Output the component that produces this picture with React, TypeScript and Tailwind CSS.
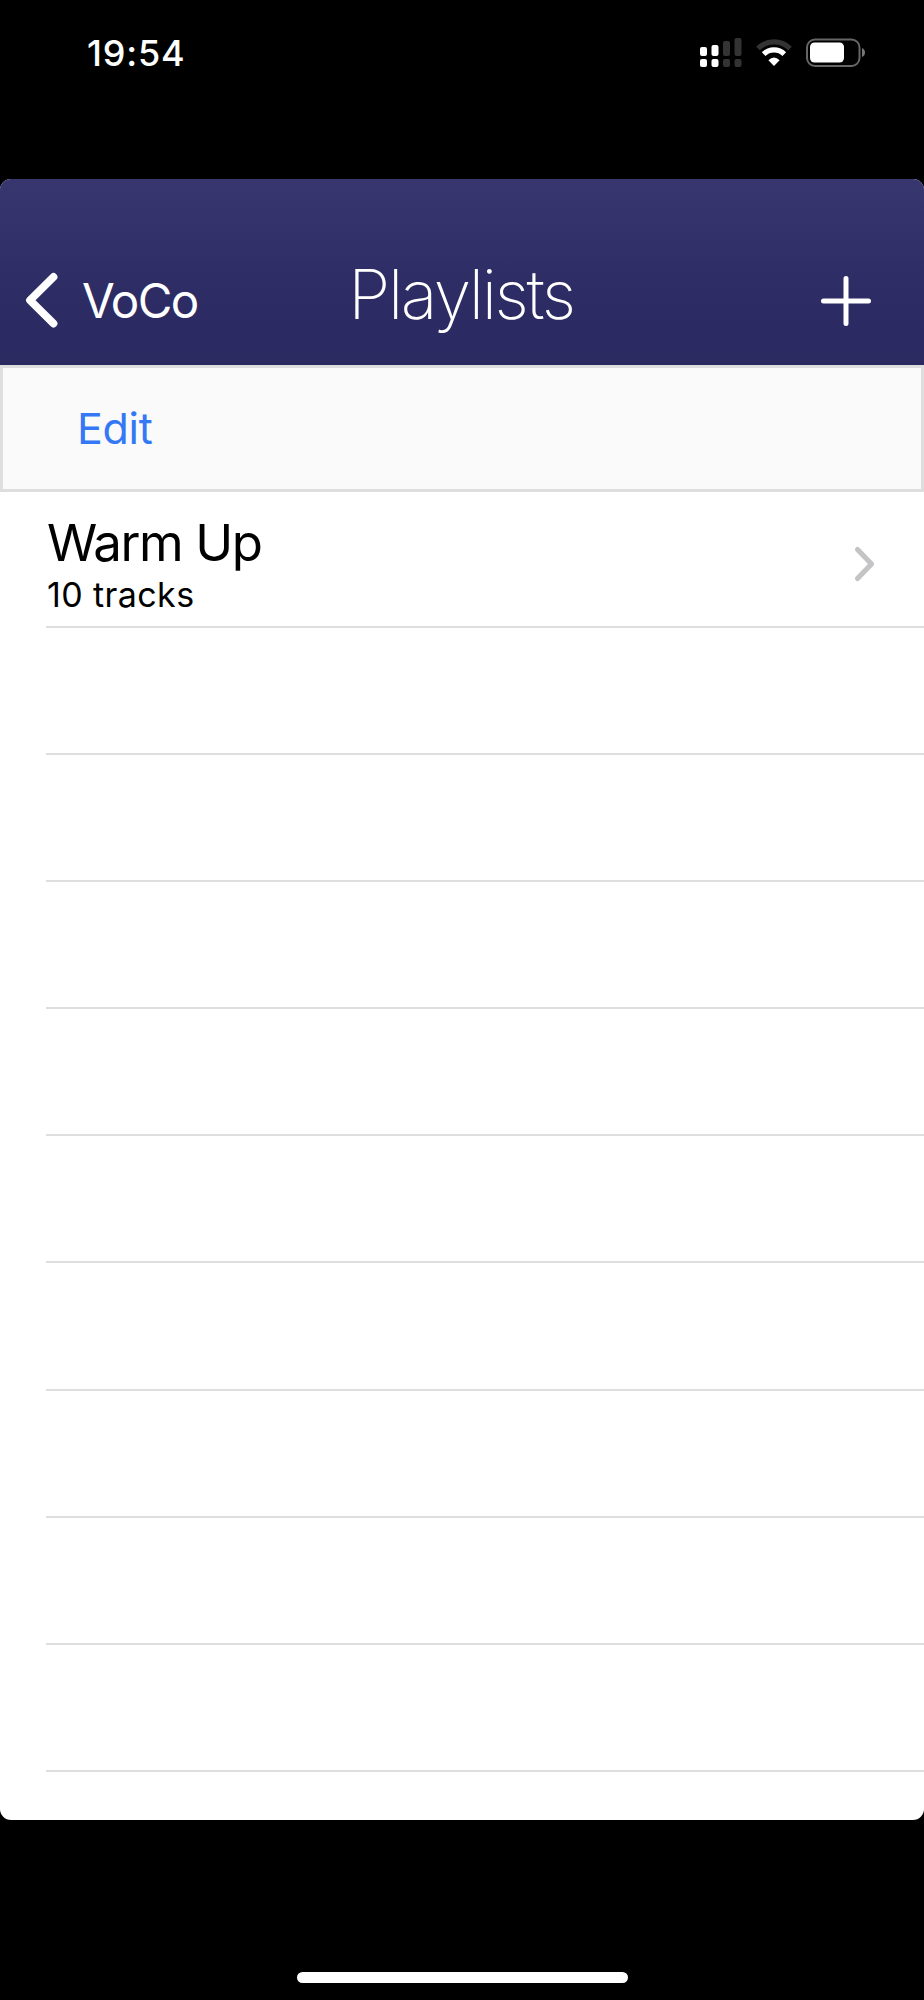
const emptyRows = ["r1", "r2", "r3", "r4", "r5", "r6", "r7", "r8", "r9"];

function StatusBar() {
  return (
    <div className="flex h-[179px] shrink-0 items-start justify-between pl-[87px] pr-[58px] pt-[33px] text-white">
      <div className="text-[36px] font-medium leading-[40px] tracking-[0.8px]">19:54</div>
      <div className="flex gap-[14px] pt-[4px]">
        <svg width="43" height="32" viewBox="0 0 43 32">
          <g fill="#fff">
            <rect x="0" y="10" width="7" height="9" rx="2" />
            <rect x="11.5" y="8" width="7" height="11" rx="2" />
            <rect x="0" y="22" width="7" height="8" rx="2" />
            <rect x="11.5" y="22" width="7" height="8" rx="2" />
          </g>
          <g fill="#333">
            <rect x="23" y="4" width="7" height="15" rx="2" />
            <rect x="34.5" y="1" width="7" height="18" rx="2" />
            <rect x="23" y="22" width="7" height="8" rx="2" />
            <rect x="34.5" y="22" width="7" height="8" rx="2" />
          </g>
        </svg>
        <svg width="36" height="32" viewBox="0 0 36 32" fill="none" className="-ml-[1px]">
          <path d="M2 11.5A22.5 22.5 0 0 1 34 11.5" stroke="#333" strokeWidth="5.2" />
          <path d="M7.7 17.1A14.6 14.6 0 0 1 28.3 17.1" stroke="#fff" strokeWidth="5.2" />
          <path d="M18 29L12.4 23.2Q18 18 23.6 23.2Z" fill="#fff" />
        </svg>
        <svg width="60" height="32" viewBox="0 0 60 32" fill="none">
          <rect x="1" y="2.5" width="52.5" height="26.5" rx="8" stroke="#666" strokeWidth="2" />
          <rect x="4" y="5.5" width="34" height="20" rx="4.5" fill="#fff" />
          <path d="M56 11Q59 12.5 59 15.5T56 20Z" fill="#777" />
        </svg>
      </div>
    </div>
  );
}

function NavigationBar() {
  return (
    <header className="grid h-[185.5px] shrink-0 grid-cols-[1fr_auto_1fr] items-start bg-linear-to-b from-[#37366f] via-[#2d2c65] via-60% to-[#2a2960] pt-[80px] text-white">
      <button className="flex items-center pl-[24px]">
        <svg width="34" height="84" viewBox="0 0 34 84" fill="none">
          <path d="M29.5 18L6 41.2L29.5 64.5" stroke="#fff" strokeWidth="7.8" strokeLinecap="round" strokeLinejoin="round" />
        </svg>
        <span className="pl-[24px] text-[47.5px] font-normal leading-[84px] tracking-[-1.6px]">VoCo</span>
      </button>
      <h1 className="-ml-[2px] text-[68px] font-extralight leading-[70px] tracking-[-2.4px]">Playlists</h1>
      <button className="flex justify-end pr-[52px]" aria-label="Add">
        <svg width="52" height="84" viewBox="0 0 52 84" fill="none">
          <path d="M26 19.5V64.5M3.5 42H48.5" stroke="#fff" strokeWidth="5" strokeLinecap="round" />
        </svg>
      </button>
    </header>
  );
}

export default function App() {
  return (
    <div className="flex h-[2000px] w-[924px] flex-col overflow-hidden bg-black font-['Inter',sans-serif]">
      <StatusBar />
      <main className="flex h-[1641px] shrink-0 flex-col overflow-hidden rounded-[11px] bg-white">
        <NavigationBar />
        <div className="flex h-[127.5px] shrink-0 items-center border-[3px] border-[#dedede] bg-[#fafafa] pl-[74px]">
          <button className="text-[43px] leading-[52px] tracking-[-0.3px] text-[#3478f6]">Edit</button>
        </div>
        <ul className="flex flex-col pl-[46px]">
          <li className="flex h-[136px] shrink-0 items-start justify-between border-b-2 border-[#dedede] pr-[47px]">
            <div className="flex flex-col pl-[1px] pt-[21px]">
              <span className="text-[51px] leading-[60px] tracking-[-1.4px]">Warm Up</span>
              <span className="text-[34px] leading-[44px] tracking-[0.4px]">10 tracks</span>
            </div>
            <svg width="24" height="38" viewBox="0 0 24 38" fill="none" className="mt-[53px]">
              <path d="M4.5 4.5L18.5 19L4.5 33.5" stroke="#c4c4c6" strokeWidth="5.2" strokeLinecap="round" strokeLinejoin="round" />
            </svg>
          </li>
          {emptyRows.map((row) => (
            <li key={row} className="h-[127.1px] shrink-0 border-b-2 border-[#dedede]" />
          ))}
        </ul>
      </main>
      <footer className="flex grow items-end justify-center pb-[17px]">
        <div className="h-[11px] w-[331px] rounded-full bg-white" />
      </footer>
    </div>
  );
}
